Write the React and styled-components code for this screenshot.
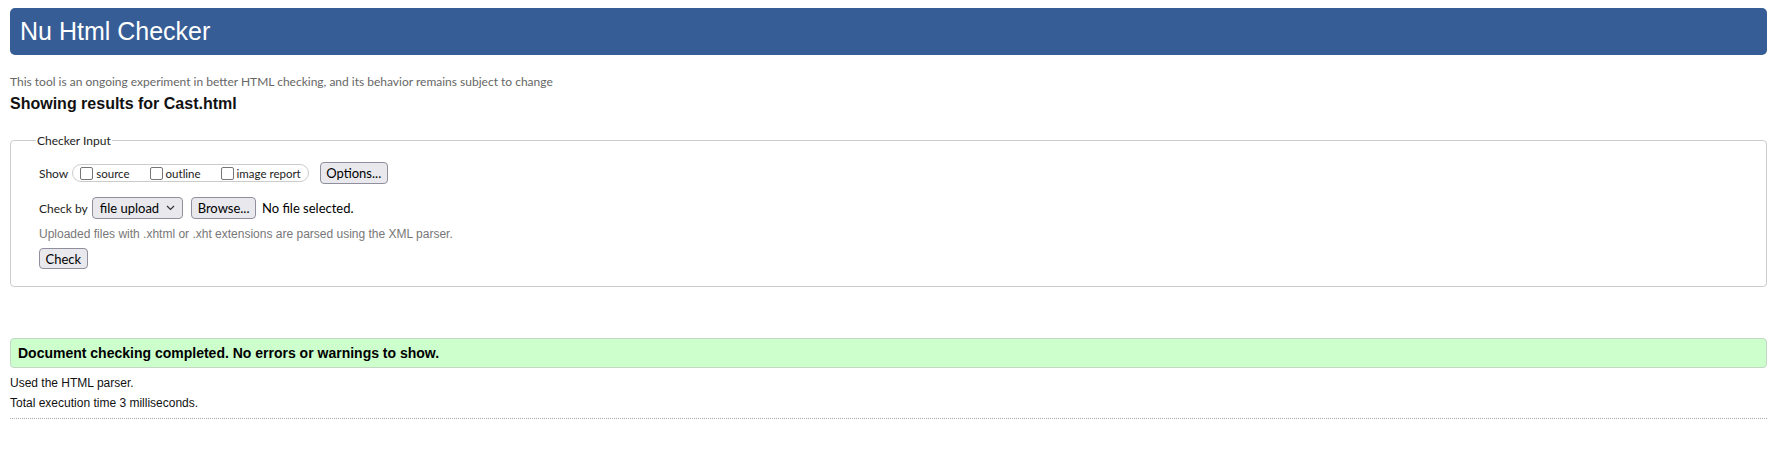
import React from 'react';
import styled, { createGlobalStyle } from 'styled-components';

const GlobalStyle = createGlobalStyle`
  html, body {
    margin: 0;
    padding: 0;
    background: #fff;
  }
  body {
    font-family: "Liberation Sans", Arial, sans-serif;
    color: #000;
  }
`;

const Page = styled.div`
  padding: 8px 23px 0 10px;
`;

const Header = styled.header`
  height: 47px;
  background: #365d95;
  border-radius: 5px;
  display: flex;
  align-items: center;
  padding-left: 10px;
`;

const Title = styled.h1`
  margin: 0;
  font-family: "Liberation Sans", Arial, sans-serif;
  font-weight: normal;
  font-size: 25px;
  color: #fff;
`;

const Intro = styled.p`
  margin: 20px 0 0;
  font-family: Lato, "Open Sans", sans-serif;
  font-size: 12px;
  line-height: 14px;
  color: #666;
`;

const Heading = styled.h2`
  margin: 5px 0 0;
  font-size: 16px;
  line-height: 19px;
  font-weight: bold;
  color: #111;
`;

const Fieldset = styled.fieldset`
  margin: 20px 0 0;
  padding: 14px 28px 17px 28px;
  border: 1px solid #ccc;
  border-radius: 4px;
  min-width: 0;
`;

const Legend = styled.legend`
  margin-left: -3px;
  padding: 0 1px;
  font-family: Lato, "Open Sans", sans-serif;
  font-size: 12px;
  color: #222;
`;

const Row = styled.div`
  display: flex;
  align-items: center;
  height: 22px;

  & + & {
    margin-top: 13px;
  }
`;

const Label = styled.span`
  font-family: Lato, "Open Sans", sans-serif;
  font-size: 12px;
  color: #222;
  margin-right: 4px;
`;

const OptionGroup = styled.div`
  display: flex;
  align-items: center;
  height: 16px;
  padding: 0 7px;
  border: 1px solid #ccc;
  border-radius: 9px;
`;

const CheckItem = styled.label`
  display: flex;
  align-items: center;
  gap: 3px;
  font-family: Lato, "Open Sans", sans-serif;
  font-size: 11.5px;
  color: #222;

  & + & {
    margin-left: 20px;
  }
`;

const Box = styled.input`
  appearance: none;
  width: 13px;
  height: 13px;
  margin: 0;
  border: 1px solid #767676;
  border-radius: 2px;
  background: #fff;
`;

const Button = styled.button`
  height: ${p => p.$h || 22}px;
  margin-left: ${p => p.$ml || 0}px;
  padding: 0 5.5px;
  font-family: Lato, "Open Sans", sans-serif;
  font-size: 13px;
  color: #000;
  background: #e9e9ed;
  border: 1px solid #8f8f9d;
  border-radius: 4px;
`;

const Select = styled.div`
  display: flex;
  align-items: center;
  gap: 7px;
  height: 20px;
  padding: 0 7px;
  font-family: Lato, "Open Sans", sans-serif;
  font-size: 13px;
  color: #000;
  background: #e9e9ed;
  border: 1px solid #8f8f9d;
  border-radius: 4px;
`;

const FileName = styled.span`
  margin-left: 6px;
  font-family: Lato, "Open Sans", sans-serif;
  font-size: 13px;
  color: #000;
`;

const Hint = styled.p`
  margin: 8px 0 0;
  font-size: 12px;
  line-height: 14px;
  color: #777;
`;

const CheckRow = styled.div`
  margin-top: 7px;
  display: flex;
`;

const Success = styled.div`
  margin-top: 51px;
  padding: 6px 7px;
  background: #ccffcc;
  border: 1px solid #c3d8c3;
  border-radius: 4px;
  font-size: 14px;
  line-height: 16px;
  font-weight: bold;
  color: #000;
`;

const Stats = styled.div`
  margin-top: 5px;
`;

const Stat = styled.p`
  margin: 0;
  font-size: 12px;
  line-height: 20px;
  color: #111;
`;

const Rule = styled.hr`
  margin: 5px 0 0;
  border: 0;
  border-top: 1px dotted #aaa;
`;

const Chevron = () => (
  <svg width="9" height="6" viewBox="0 0 9 6">
    <path d="M1 1l3.5 3.5L8 1" fill="none" stroke="#333" strokeWidth="1.2" />
  </svg>
);

export default function App() {
  return (
    <Page>
      <GlobalStyle />
      <Header>
        <Title>Nu Html Checker</Title>
      </Header>
      <Intro>
        This tool is an ongoing experiment in better HTML checking, and its behavior remains subject to change
      </Intro>
      <Heading>Showing results for Cast.html</Heading>
      <Fieldset>
        <Legend>Checker Input</Legend>
        <Row>
          <Label>Show</Label>
          <OptionGroup>
            <CheckItem><Box type="checkbox" />source</CheckItem>
            <CheckItem><Box type="checkbox" />outline</CheckItem>
            <CheckItem><Box type="checkbox" />image report</CheckItem>
          </OptionGroup>
          <Button $ml={11}>Options...</Button>
        </Row>
        <Row>
          <Label>Check by</Label>
          <Select>
            file upload
            <Chevron />
          </Select>
          <Button $ml={8}>Browse...</Button>
          <FileName>No file selected.</FileName>
        </Row>
        <Hint>Uploaded files with .xhtml or .xht extensions are parsed using the XML parser.</Hint>
        <CheckRow>
          <Button $h={21}>Check</Button>
        </CheckRow>
      </Fieldset>
      <Success>Document checking completed. No errors or warnings to show.</Success>
      <Stats>
        <Stat>Used the HTML parser.</Stat>
        <Stat>Total execution time 3 milliseconds.</Stat>
      </Stats>
      <Rule />
    </Page>
  );
}
